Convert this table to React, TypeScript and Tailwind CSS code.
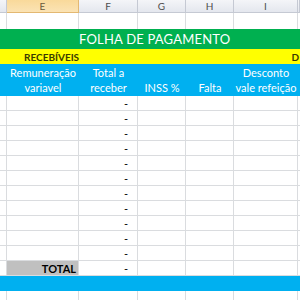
const COLS = 'grid grid-cols-[7px_72px_59px_48px_48px_64px_2px]';
const LINE = 'border-r border-b border-[#dadcdf]';
const font = { fontFamily: 'Lato, "Open Sans", sans-serif' };

const LETTERS = ['', 'E', 'F', 'G', 'H', 'I', ''];

function DataRow({ total = false }: { total?: boolean }) {
  return (
    <div className={`${COLS} h-[15px]`}>
      <div className={LINE} />
      {total ? (
        <div className={`${LINE} bg-[#c0c0c0] flex items-center justify-end pr-[2px] text-[11px] font-bold text-black leading-none`}>
          TOTAL
        </div>
      ) : (
        <div className={LINE} />
      )}
      <div className={`${LINE} flex items-center justify-end pr-[9px] text-[11px] text-black leading-none`}>-</div>
      <div className={LINE} />
      <div className={LINE} />
      <div className={LINE} />
      <div className="border-b border-[#dadcdf]" />
    </div>
  );
}

export default function App() {
  return (
    <div className="w-[300px] h-[300px] overflow-hidden bg-white" style={font}>
      {/* column letters */}
      <div className={`${COLS} h-[13px]`}>
        {LETTERS.map((l, i) => (
          <div
            key={i}
            className={`flex items-center justify-center text-[10px] leading-none border-r border-b ${
              l === 'E'
                ? 'bg-gradient-to-b from-[#f9d99a] to-[#fbe3b4] border-[#e3b872] text-[#6a5a3a]'
                : 'bg-gradient-to-b from-[#f4f5f8] to-[#e4e7ee] border-[#c5c9d3] text-[#4d4d4d]'
            }`}
          >
            {l}
          </div>
        ))}
      </div>

      {/* empty row */}
      <div className={`${COLS} h-[16px]`}>
        {LETTERS.map((_, i) => (
          <div key={i} className={i === 6 ? '' : 'border-r border-[#dadcdf]'} />
        ))}
      </div>

      {/* title */}
      <div className="h-[20px] bg-[#00b050] flex items-center">
        <span className="ml-[79px] text-[13px] text-white leading-none tracking-[0.2px]">FOLHA DE PAGAMENTO</span>
      </div>

      {/* section band */}
      <div className="h-[15px] bg-[#ffff00] flex items-center justify-between">
        <span className="ml-[24px] text-[10px] font-bold text-[#3a3a00] leading-none">RECEBÍVEIS</span>
        <span className="text-[10px] font-bold text-[#3a3a00] leading-none mr-[1px]">D</span>
      </div>

      {/* column headings */}
      <div className={`${COLS} h-[32px] bg-[#00b0f0] text-white text-[11px] leading-[15px]`}>
        <div />
        <div className="flex flex-col items-center justify-end pb-[1px]">
          <span>Remuneração</span>
          <span>variavel</span>
        </div>
        <div className="flex flex-col items-center justify-end pb-[1px]">
          <span>Total a</span>
          <span>receber</span>
        </div>
        <div className="flex flex-col items-center justify-end pb-[1px]">
          <span>INSS %</span>
        </div>
        <div className="flex flex-col items-center justify-end pb-[1px]">
          <span>Falta</span>
        </div>
        <div className="flex flex-col items-center justify-end pb-[1px] whitespace-nowrap">
          <span>Desconto</span>
          <span>vale refeição</span>
        </div>
        <div />
      </div>

      {Array.from({ length: 11 }).map((_, i) => (
        <DataRow key={i} />
      ))}
      <DataRow total />

      <div className="h-[15px] bg-[#00b0f0]" />

      <div className={`${COLS} h-[15px]`}>
        {LETTERS.map((_, i) => (
          <div key={i} className={i === 6 ? '' : 'border-r border-[#dadcdf]'} />
        ))}
      </div>
    </div>
  );
}
